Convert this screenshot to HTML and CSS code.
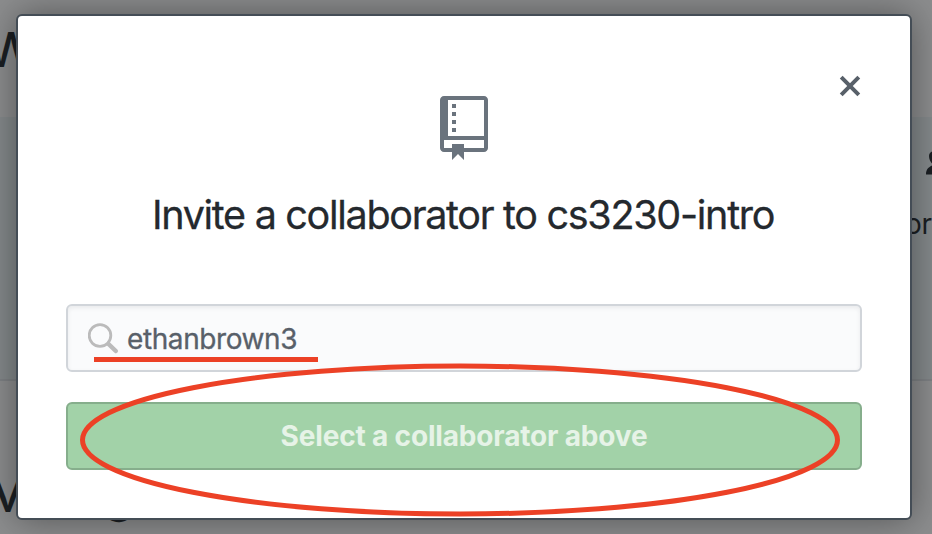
FILE: index.html
```html
<!DOCTYPE html>
<html lang="en">
<head>
<meta charset="utf-8">
<title>Invite a collaborator</title>
<link rel="stylesheet" href="styles.css">
</head>
<body>
<div class="page">
  <div class="section who"><h2>Who has access</h2></div>
  <div class="section band">
    <svg class="people" width="40" height="30" viewBox="0 0 40 30"><path d="M1 24.500c0-5 2-7 7-9.500-2-3-4-5-4-9 0-7 14-7 14 0 0 4-2 6-4 9 3 2 9 4 9 9.500z"/></svg>
    <span class="count">or</span>
  </div>
  <div class="section manage"><h2>Manage</h2></div>
</div>
<main class="dialog">
  <button class="close" aria-label="Close"><svg width="24" height="24" viewBox="0 0 24 24"><path d="M3.200 3.200l17.600 17.600M20.800 3.200L3.200 20.800"/></svg></button>
  <svg class="repo" width="48" height="64" viewBox="0 0 12 16"><path fill-rule="evenodd" d="M4 9H3V8h1v1zm0-3H3v1h1V6zm0-2H3v1h1V4zm0-2H3v1h1V2zm8-1v12c0 .55-.45 1-1 1H6v2l-1.500-1.500L3 16v-2H1c-.55 0-1-.45-1-1V1c0-.55.45-1 1-1h10c.55 0 1 .45 1 1zm-1 10H1v2h2v-1h3v1h5v-2zm0-10H2v9h9V1z"/></svg>
  <h1><span>Invite a collaborator to cs3230-intro</span></h1>
  <div class="search">
    <svg width="32" height="32" viewBox="0 0 32 32"><circle cx="12" cy="12.500" r="10.800"/><path class="handle" d="M20.500 21l7.300 7"/></svg>
    <span class="query">ethanbrown3</span>
  </div>
  <button class="submit"><span>Select a collaborator above</span></button>
</main>
<svg class="marks" width="932" height="534" viewBox="0 0 932 534"><path d="M94 359.500h224"/><ellipse cx="460" cy="440" rx="377.500" ry="74"/></svg>
</body>
</html>
```
FILE: styles.css
```css
* { box-sizing: border-box; }
body { margin: 0; width: 932px; height: 534px; overflow: hidden; position: relative; background: #8c8d8e; font-family: Inter, "Liberation Sans", sans-serif; }
.page { height: 534px; display: flex; flex-direction: column; color: #1b1f23; }
.section { overflow: hidden; flex: none; }
.section h2 { margin: 0; font-size: 48px; font-weight: 450; line-height: 58px; white-space: nowrap; }
.who { height: 117px; padding-top: 21px; }
.who h2 { margin-left: -13px; }
.band { height: 264px; background: #84898b; border-bottom: 2px solid #7e8184; display: flex; flex-direction: column; padding: 33px 0 0 908px; }
.people { margin-left: 17px; flex: none; fill: #1b1f23; }
.count { font-size: 28px; line-height: 34px; margin-top: 27px; margin-left: -3px; white-space: nowrap; letter-spacing: -.3px; }
.manage { height: 153px; padding-top: 85px; }
.manage h2 { margin-left: -14px; letter-spacing: -2.300px; }
.dialog { position: absolute; left: 16px; top: 14px; width: 896px; height: 506px; border: 2px solid #444d56; border-radius: 6px; background: #fff; box-shadow: 0 0 36px rgba(0,0,0,.4); padding: 80px 48px 0; display: flex; flex-direction: column; }
.close { position: absolute; right: 48px; top: 58px; width: 24px; height: 24px; padding: 0; border: 0; background: none; }
.close svg { display: block; fill: none; stroke: #586069; stroke-width: 4; }
.repo { align-self: center; flex: none; fill: #6a737d; }
h1 { margin: 30px 0 0; padding-right: 2px; text-align: center; color: #24292e; font-size: 39.500px; font-weight: 400; line-height: 50px; white-space: nowrap; letter-spacing: -1.300px; -webkit-text-stroke: .3px #24292e; }
.search { margin-top: 64px; height: 68px; flex: none; border: 2px solid #d1d5da; border-radius: 6px; background: #fafbfc; box-shadow: inset 0 2px 4px rgba(27,31,35,.075); display: flex; padding: 0 20px; }
.search svg { margin-top: 17px; flex: none; fill: none; stroke: #bbb; stroke-width: 2.800; }
.search .handle { stroke-width: 4.500; stroke-linecap: round; }
.query { margin-left: 7px; color: #586069; font-size: 28px; font-weight: 400; line-height: 66px; letter-spacing: -.4px; -webkit-text-stroke: .3px #586069; }
.submit { margin-top: 30px; height: 68px; flex: none; padding: 0; border: 2px solid #86ae8c; border-radius: 6px; background: #a2d2a8; color: #e6f3e7; font: 700 28px/64px Inter, "Liberation Sans", sans-serif; letter-spacing: -.17px; }
.marks { position: absolute; left: 0; top: 0; fill: none; stroke: #ec4126; stroke-width: 5; pointer-events: none; }
```
